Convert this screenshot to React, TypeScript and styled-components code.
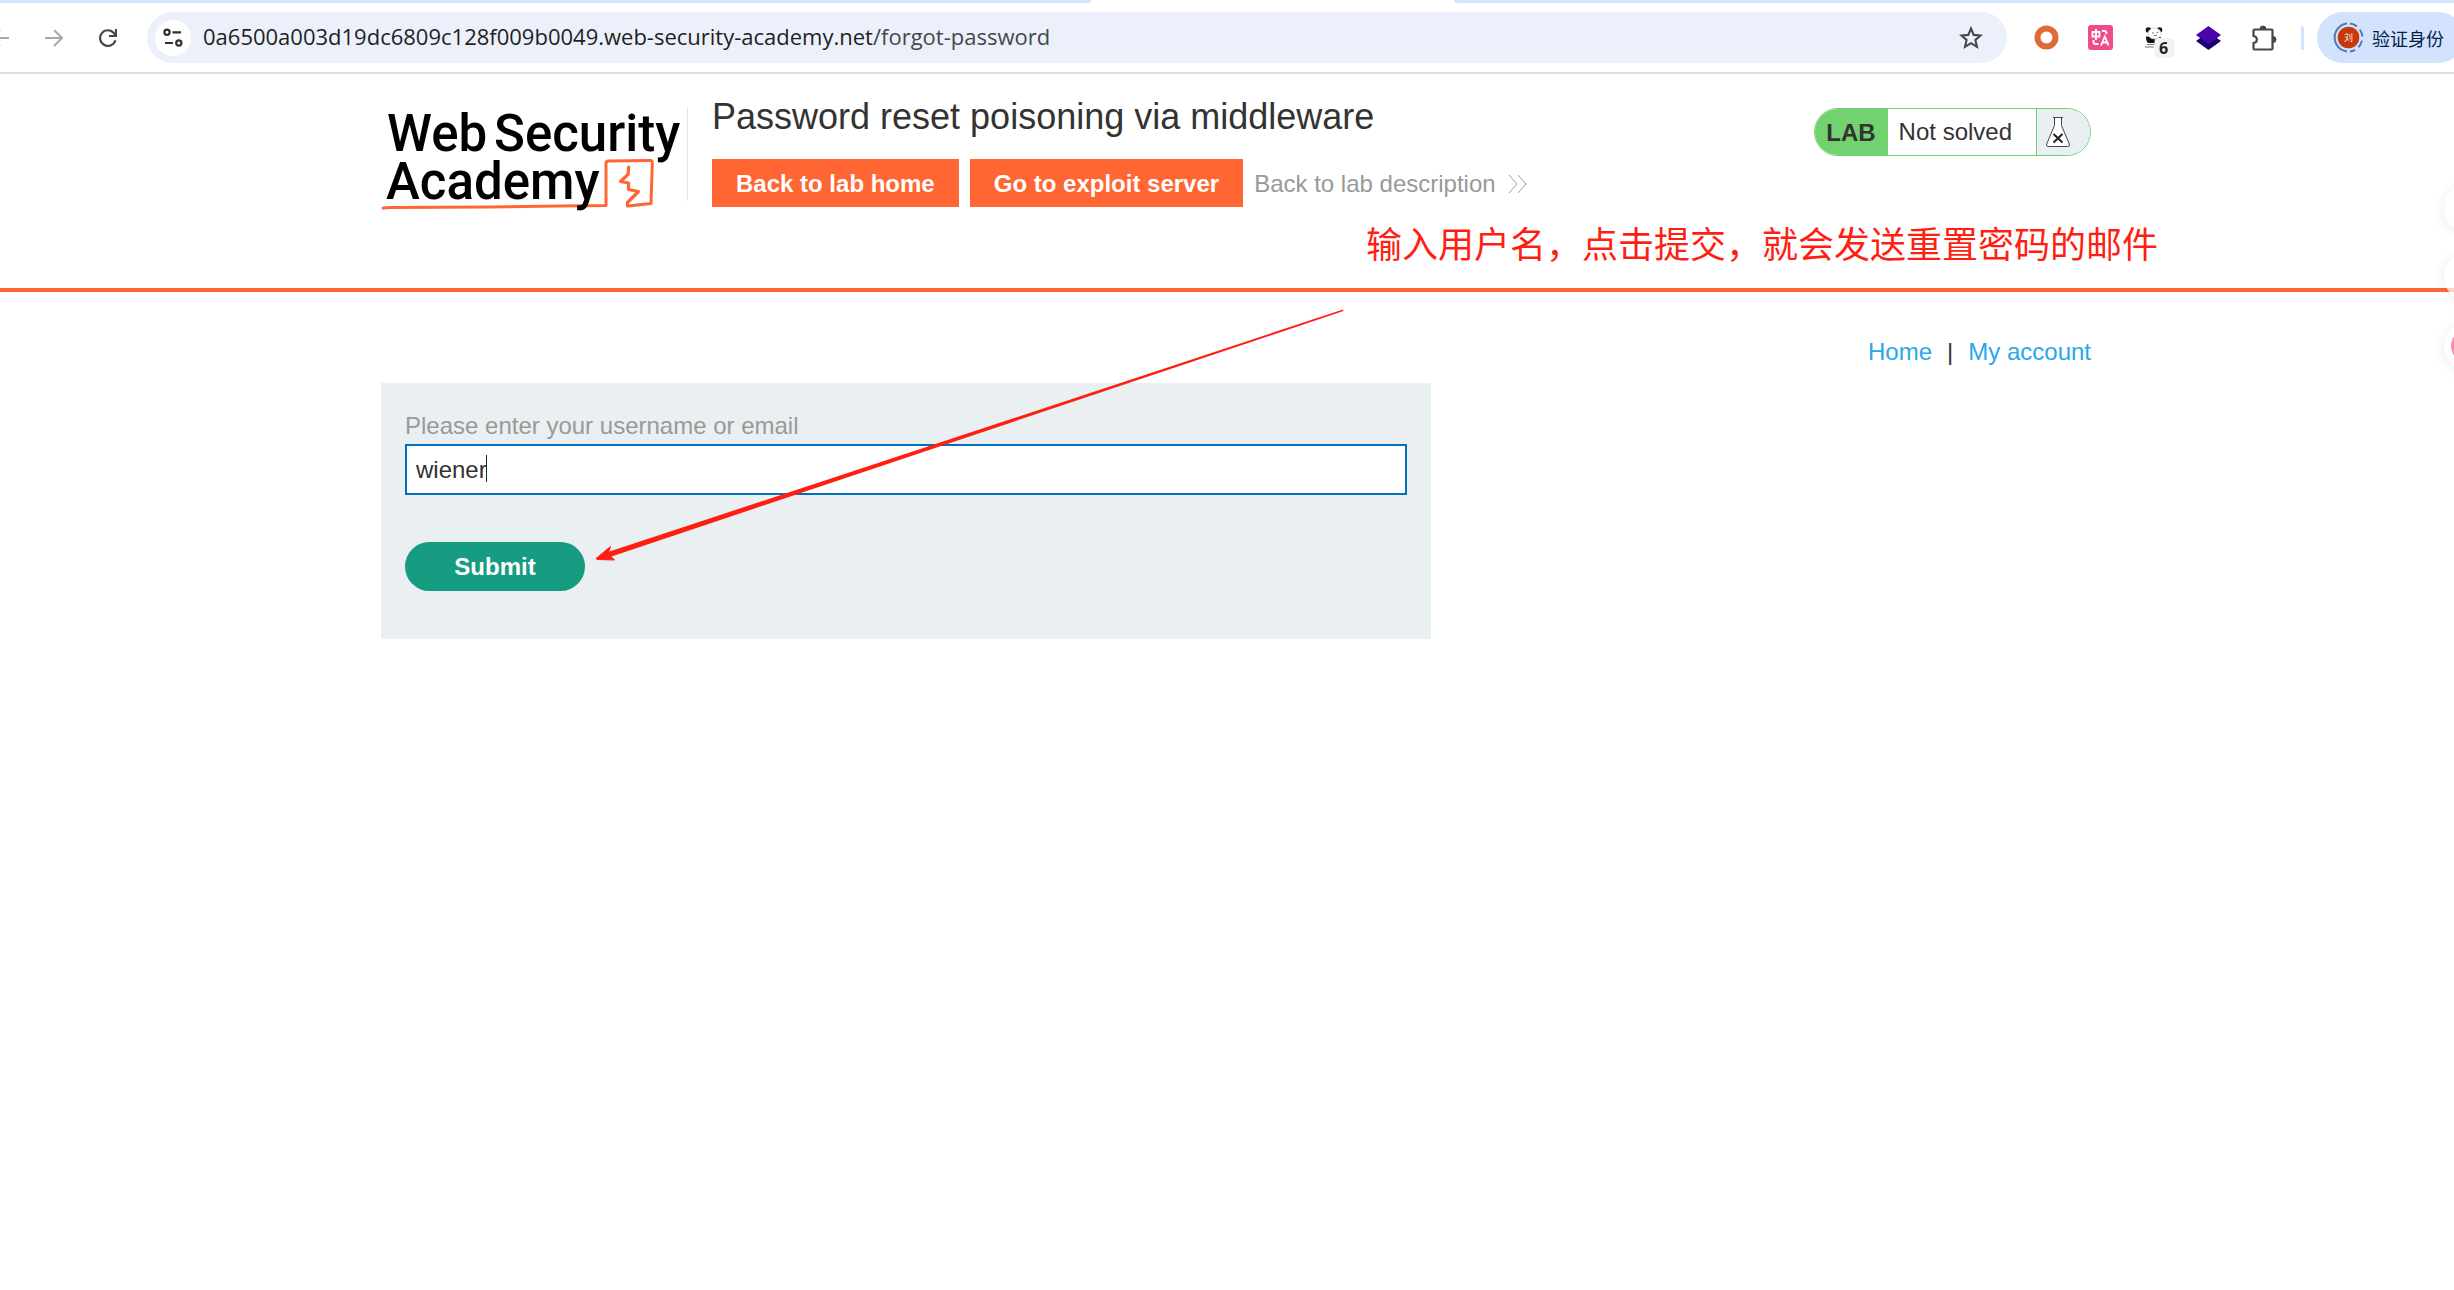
import React from "react";
import styled, { createGlobalStyle } from "styled-components";

const sans = '"Liberation Sans", Arial, sans-serif';
const cjk = '"Noto Sans CJK SC", "Noto Sans", sans-serif';

const GlobalStyle = createGlobalStyle`
  *, *::before, *::after { box-sizing: border-box; }
  body {
    margin: 0;
    background: #fff;
    color: #333332;
    font-family: ${sans};
    font-size: 24px;
    overflow-x: hidden;
  }
`;

const Shell = styled.div`
  position: relative;
  min-height: 100vh;
  overflow: hidden;
`;

/* Browser chrome */
const TabStrip = styled.div`
  display: grid;
  grid-template-columns: 1091px 363px 1fr;
  height: 3px;
`;

const InactiveTabs = styled.div<{ $side: "left" | "right" }>`
  background: #d3e3fd;
  border-radius: ${(p) => (p.$side === "left" ? "0 0 4px 0" : "0 0 0 4px")};
`;

const Toolbar = styled.div`
  display: flex;
  align-items: center;
  margin: 0 -10px 0 -27px;
  padding: 9px 0;
`;

const ToolbarRule = styled.div`
  height: 2px;
  background: #e0e0e0;
`;

const ToolButton = styled.button<{ $dim?: boolean }>`
  display: flex;
  flex: none;
  align-items: center;
  justify-content: center;
  width: 54px;
  height: 48px;
  padding: 0;
  border: 0;
  background: none;
  color: ${(p) => (p.$dim ? "#a9a9a9" : "#474747")};
`;

const Omnibox = styled.div`
  display: flex;
  flex: 1;
  align-items: center;
  gap: 12px;
  height: 51px;
  margin: 0 12px;
  padding: 0 9px 0 8px;
  border-radius: 26px;
  background: #ebf0fa;
`;

const SiteInfo = styled.button`
  display: flex;
  align-items: center;
  justify-content: center;
  width: 36px;
  height: 36px;
  padding: 0;
  border: 0;
  border-radius: 50%;
  background: #fff;
`;

const Url = styled.div`
  flex: 1;
  padding-bottom: 3px;
  color: #1f1f1f;
  font: 22px/32px "Open Sans", "Noto Sans", sans-serif;
  white-space: nowrap;
`;

const UrlPath = styled.span`
  color: #474747;
`;

const Separator = styled.div`
  width: 3px;
  height: 24px;
  margin: 0 13px 0 12px;
  border-radius: 2px;
  background: #d3e3fd;
`;

const Profile = styled.button`
  display: flex;
  align-items: center;
  gap: 8px;
  height: 51px;
  padding: 0 20px 0 16px;
  border: 0;
  border-radius: 26px;
  background: #d3e3fd;
  color: #041e49;
  font: 18px/24px ${cjk};
  white-space: nowrap;
`;

/* Lab page */
const Container = styled.div`
  width: 1710px;
  max-width: 100%;
  margin: 0 auto;
`;

const Header = styled.header`
  height: 218px;
  padding: 22px 0 0 18px;
  border-bottom: 4px solid #ff6633;
`;

const HeaderRow = styled(Container)`
  display: flex;
  align-items: flex-start;
`;

const LogoLink = styled.a`
  display: flex;
  height: 93px;
  margin-top: 12px;
  padding-right: 5px;
  border-right: 1px solid #e4e4e4;
`;

const LogoSvg = styled.svg`
  display: block;
  overflow: visible;
`;

const TitleBlock = styled.div`
  flex: 1;
  padding-left: 24px;
`;

const Title = styled.h2`
  margin: 0 0 21px;
  font-size: 36px;
  font-weight: 400;
  line-height: 42px;
`;

const Actions = styled.div`
  display: flex;
  align-items: center;
  gap: 11px;
`;

const ActionLink = styled.a`
  padding: 1px 24px 0;
  background: #ff6633;
  color: #fff;
  font-weight: 700;
  line-height: 47px;
  text-decoration: none;
`;

const BackLink = styled.a`
  display: flex;
  align-items: center;
  gap: 12px;
  padding-top: 1px;
  color: #999;
  line-height: 47px;
  text-decoration: none;
`;

const Status = styled.div`
  display: flex;
  height: 48px;
  margin-top: 12px;
  overflow: hidden;
  border: 1px solid #72d270;
  border-radius: 24px;
  line-height: 46px;
`;

const StatusTag = styled.span`
  padding: 1px 12px 0 11px;
  background: #72d270;
  font-weight: 700;
`;

const StatusText = styled.span`
  padding: 0 24px 0 11px;
`;

const StatusIcon = styled.span`
  display: flex;
  align-items: center;
  width: 54px;
  padding-left: 8px;
  border-left: 1px solid #72d270;
  background: #eaeff2;
`;

const Main = styled.main`
  padding: 46px 0 0 18px;
`;

const Nav = styled.nav`
  display: flex;
  justify-content: flex-end;
  gap: 15px;
  margin-bottom: 17px;
  line-height: 28px;
`;

const NavLink = styled.a`
  color: #29a7e8;
  text-decoration: none;
`;

const Form = styled.form`
  width: 1050px;
  max-width: 100%;
  padding: 25px 24px 48px;
  background: #eaeff2;
`;

const Label = styled.label`
  display: block;
  color: #999;
  line-height: 36px;
`;

const Field = styled.div`
  position: relative;
`;

const Input = styled.input`
  display: block;
  width: 100%;
  height: 51px;
  padding: 0 9px;
  border: 2px solid #0071ba;
  outline: 0;
  background: #fff;
  color: #333332;
  font: 24px ${sans};
`;

const Caret = styled.span`
  position: absolute;
  top: 11px;
  left: 81px;
  width: 1px;
  height: 27px;
  background: #222;
`;

const Submit = styled.button`
  display: block;
  width: 180px;
  height: 49px;
  margin-top: 47px;
  padding: 0;
  border: 0;
  border-radius: 25px;
  background: #169c80;
  color: #fff;
  font: 700 24px ${sans};
`;

/* Hand-drawn notes lying over the page */
const Note = styled.p`
  position: absolute;
  top: 216px;
  left: 1366px;
  margin: 0;
  color: #ff1f12;
  font: 36px/52px ${cjk};
  white-space: nowrap;
`;

const Arrow = styled.svg`
  position: absolute;
  top: 300px;
  left: 590px;
  pointer-events: none;
`;

const FloatingButtons = styled.div`
  position: absolute;
  top: 184px;
  right: -38px;
  display: grid;
  gap: 21px;
`;

const FloatingButton = styled.div`
  display: flex;
  align-items: center;
  width: 48px;
  height: 48px;
  padding-left: 7px;
  border-radius: 50%;
  background: rgba(255, 255, 255, 0.7);
  box-shadow: 0 2px 14px rgba(0, 0, 0, 0.08);
`;

const PinkDot = styled.span`
  width: 34px;
  height: 34px;
  border-radius: 50%;
  background: #f48fb1;
`;

const BackIcon = () => (
  <svg width="18" height="18" viewBox="0 0 18 18" fill="none" stroke="currentColor" strokeWidth="2">
    <path d="M18 9H2M9 1L1 9l8 8" />
  </svg>
);

const ForwardIcon = () => (
  <svg width="18" height="18" viewBox="0 0 18 18" fill="none" stroke="currentColor" strokeWidth="2">
    <path d="M0 9h16M9 1l8 8-8 8" />
  </svg>
);

const ReloadIcon = () => (
  <svg width="18" height="18" viewBox="0 0 18 18" fill="none" stroke="currentColor" strokeWidth="2.2">
    <path d="M16.4 11.2A7.8 7.8 0 1 1 15 4.2l2 2.3" />
    <path d="M17 0v7h-7" />
  </svg>
);

const TuneIcon = () => (
  <svg width="20" height="20" viewBox="0 0 20 20" fill="none" stroke="#303030" strokeWidth="2.2">
    <circle cx="4" cy="4.3" r="2.6" />
    <path d="M9.5 4.3H18M2 15h8" />
    <circle cx="15.8" cy="15" r="2.6" />
  </svg>
);

const StarIcon = () => (
  <svg width="24" height="24" viewBox="0 0 24 24" fill="none" stroke="currentColor" strokeWidth="2.1">
    <path d="M12 2.5l2.7 6.4 6.9.6-5.200 4.500 1.600 6.800-6-3.600-6 3.600L7.600 14 2.400 9.500l6.900-.6z" />
  </svg>
);

const RingIcon = () => (
  <svg width="25" height="25" viewBox="0 0 25 25">
    <circle cx="12.500" cy="12.500" r="9" fill="none" stroke="#e06a35" strokeWidth="6" />
  </svg>
);

const TranslateIcon = () => (
  <svg width="25" height="25" viewBox="0 0 25 25" fill="none" stroke="#fff" strokeWidth="1.800">
    <rect width="25" height="25" rx="3" fill="#ee4c8b" stroke="none" />
    <path d="M4.500 7h7v4.500h-7zM8 4v11M14 6h2.500q2 0 2 3M5.500 15v2q0 2 2 2h3" />
    <path d="M13 20.500l3.800-9 3.800 9M14.300 17.500h5" />
  </svg>
);

const PandaIcon = () => (
  <svg width="42" height="40" viewBox="-12 -2 42 40">
    <circle cx="3.500" cy="10" r="2.800" fill="#111" />
    <circle cx="14.500" cy="10" r="2.800" fill="#111" />
    <path d="M1 16.500c0 4 1 6.500 3 6.500h9l3-6z" fill="#111" />
    <ellipse cx="9.500" cy="13.500" rx="6.500" ry="5.500" fill="#fff" stroke="#ccc" strokeWidth=".6" />
    <path d="M7 12.500l2 1M11.500 13l2-1M9 15.500h3" stroke="#777" strokeWidth="1" />
    <path d="M2 24.500h8M0 27h9" stroke="#777" strokeWidth="1.200" />
    <rect x="9.500" y="18" width="20" height="20" rx="4" fill="#f1f3f4" />
    <text x="18.500" y="34" fill="#1f1f1f" fontFamily="Open Sans, sans-serif" fontSize="16" fontWeight="700" textAnchor="middle">
      6
    </text>
  </svg>
);

const LayersIcon = () => (
  <svg width="25" height="24" viewBox="0 0 25 24">
    <path d="M0 15L12.500 6 25 15l-12.500 9z" fill="#1d0070" />
    <path d="M0 9L12.500 0 25 9l-12.500 9z" fill="#4a03ab" />
  </svg>
);

const PuzzleIcon = () => (
  <svg width="30" height="26" viewBox="-4 0 30 26">
    <path
      d="M2.500 5.500q0-1 1-1h17q1 0 1 1v18q0 1-1 1h-17q-1 0-1-1v-5.300c4.500-.8 4.500-6.400 0-7.200z"
      fill="none"
      stroke="#474747"
      strokeWidth="2.200"
    />
    <path d="M9 4a3 3 0 0 1 6 0zM22 11.500a3 3 0 0 1 0 6z" fill="#474747" stroke="#474747" />
  </svg>
);

const Avatar = () => (
  <svg width="31" height="31" viewBox="0 0 31 31">
    <path d="M14 1.600a14 14 0 0 0 0 27.800" fill="none" stroke="#5577b0" strokeWidth="2" />
    <path
      d="M17 1.600a14 14 0 0 1 0 27.800"
      fill="none"
      stroke="#5577b0"
      strokeWidth="2"
      strokeDasharray="7.500 4.200"
    />
    <circle cx="15.500" cy="15.500" r="10.800" fill="#c5390b" />
    <text x="15.500" y="19" fill="#ffe9df" fontFamily="Noto Sans CJK SC, sans-serif" fontSize="9" textAnchor="middle">
      刘
    </text>
  </svg>
);

const Logo = () => (
  <LogoSvg width="301" height="93" viewBox="0 0 301 93" role="img" aria-label="Web Security Academy">
    <path
      d="M1 100.500Q4 99.300 13 99.500L108 99 178 98 225 97.500V55Q225 53 227.500 53L269 52.500Q271.500 52.500 271.300 55L270 95.500 247 98"
      fill="none"
      stroke="#ff6633"
      strokeWidth="3"
      strokeLinejoin="round"
    />
    <path
      d="M247.700 59L247 66.500 239.500 73.500 247.500 75V81.500L257.500 83.500 246.500 94.500V98"
      fill="none"
      stroke="#ff6633"
      strokeWidth="3.200"
      strokeLinejoin="round"
      strokeLinecap="round"
    />
    <g fill="#000" fontFamily="Roboto, sans-serif" fontSize="51" fontWeight="500">
      <text x="6" y="43">Web</text>
      <text x="113" y="43">Security</text>
      <text x="5" y="91">Academy</text>
    </g>
  </LogoSvg>
);

const DoubleChevron = () => (
  <svg width="20" height="18" viewBox="0 0 20 18" fill="none" stroke="#999" strokeWidth="1">
    <path d="M1 0l8 9-8 9M10 0l8 9-8 9" />
  </svg>
);

const Flask = () => (
  <svg width="26" height="32" viewBox="0 0 26 32" fill="#fff" stroke="#444" strokeWidth="1">
    <path d="M8 1.500h10M9.500 2v7.500L1.700 28q-.8 2.500 1.500 2.500h19.600q2.300 0 1.500-2.500L16.500 9.500V2" />
    <path d="M8.500 18l9 8.500M17.500 18l-9 8.500" stroke="#222" strokeWidth="2" />
  </svg>
);

export default function App() {
  return (
    <Shell>
      <GlobalStyle />
      <TabStrip>
        <InactiveTabs $side="left" />
        <div />
        <InactiveTabs $side="right" />
      </TabStrip>
      <Toolbar>
        <ToolButton $dim aria-label="Back"><BackIcon /></ToolButton>
        <ToolButton $dim aria-label="Forward"><ForwardIcon /></ToolButton>
        <ToolButton aria-label="Reload"><ReloadIcon /></ToolButton>
        <Omnibox>
          <SiteInfo aria-label="Site information"><TuneIcon /></SiteInfo>
          <Url role="textbox" aria-label="Address">
            0a6500a003d19dc6809c128f009b0049.web-security-academy.net<UrlPath>/forgot-password</UrlPath>
          </Url>
          <ToolButton aria-label="Bookmark"><StarIcon /></ToolButton>
        </Omnibox>
        <ToolButton aria-label="Recorder"><RingIcon /></ToolButton>
        <ToolButton aria-label="Translate"><TranslateIcon /></ToolButton>
        <ToolButton aria-label="Panda"><PandaIcon /></ToolButton>
        <ToolButton aria-label="Layers"><LayersIcon /></ToolButton>
        <ToolButton aria-label="Extensions"><PuzzleIcon /></ToolButton>
        <Separator />
        <Profile>
          <Avatar />
          验证身份
        </Profile>
      </Toolbar>
      <ToolbarRule />

      <Header>
        <HeaderRow>
          <LogoLink href="#"><Logo /></LogoLink>
          <TitleBlock>
            <Title>Password reset poisoning via middleware</Title>
            <Actions>
              <ActionLink href="#">Back to lab home</ActionLink>
              <ActionLink href="#">Go to exploit server</ActionLink>
              <BackLink href="#">
                Back to lab description
                <DoubleChevron />
              </BackLink>
            </Actions>
          </TitleBlock>
          <Status>
            <StatusTag>LAB</StatusTag>
            <StatusText>Not solved</StatusText>
            <StatusIcon><Flask /></StatusIcon>
          </Status>
        </HeaderRow>
      </Header>

      <Main>
        <Container>
          <Nav>
            <NavLink href="#">Home</NavLink>
            <span>|</span>
            <NavLink href="#">My account</NavLink>
          </Nav>
          <Form onSubmit={(e) => e.preventDefault()}>
            <Label htmlFor="username">Please enter your username or email</Label>
            <Field>
              <Input id="username" type="text" name="username" defaultValue="wiener" />
              <Caret />
            </Field>
            <Submit type="submit">Submit</Submit>
          </Form>
        </Container>
      </Main>

      <Note>输入用户名，点击提交，就会发送重置密码的邮件</Note>
      <Arrow width="760" height="270" viewBox="0 0 760 270" fill="#ff1f12">
        <path d="M753 9.500L18 252l2 5L753.500 11z" />
        <path d="M6 258.500L20.500 246.500l-2 6 2.500 4 3.500 3.500L7 259.500z" stroke="#ff1f12" strokeLinejoin="round" />
      </Arrow>
      <FloatingButtons>
        <FloatingButton />
        <FloatingButton />
        <FloatingButton><PinkDot /></FloatingButton>
      </FloatingButtons>
    </Shell>
  );
}
